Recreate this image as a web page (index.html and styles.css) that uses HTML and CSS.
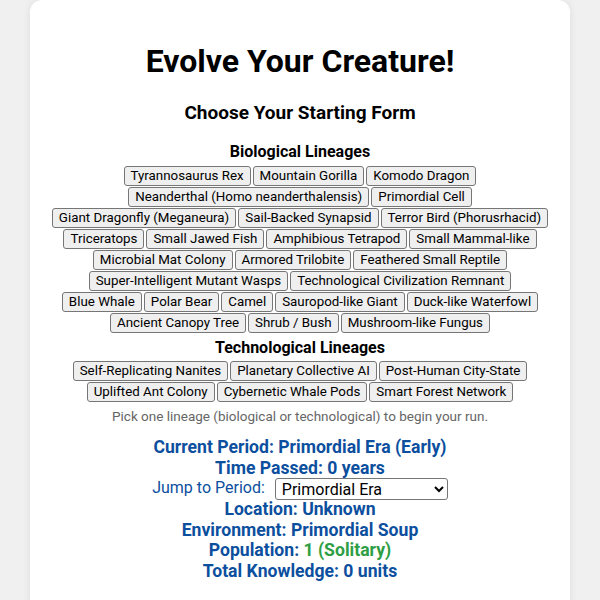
FILE: index.html
```html
<!DOCTYPE html>
<html>
<head>
<meta charset="utf-8">
<link rel="stylesheet" href="styles.css">
</head>
<body>
<div class="card">
  <h1 class="title">Evolve Your Creature!</h1>
  <h2 class="subtitle">Choose Your Starting Form</h2>
  <h3 class="group-title">Biological Lineages</h3>
  <div class="choices">
    <button>Tyrannosaurus Rex</button>
    <button>Mountain Gorilla</button>
    <button>Komodo Dragon</button>
    <button>Neanderthal (Homo neanderthalensis)</button>
    <button>Primordial Cell</button>
    <button>Giant Dragonfly (Meganeura)</button>
    <button>Sail-Backed Synapsid</button>
    <button>Terror Bird (Phorusrhacid)</button>
    <button>Triceratops</button>
    <button>Small Jawed Fish</button>
    <button>Amphibious Tetrapod</button>
    <button>Small Mammal-like</button>
    <button>Microbial Mat Colony</button>
    <button>Armored Trilobite</button>
    <button>Feathered Small Reptile</button>
    <button>Super-Intelligent Mutant Wasps</button>
    <button>Technological Civilization Remnant</button>
    <button>Blue Whale</button>
    <button>Polar Bear</button>
    <button>Camel</button>
    <button>Sauropod-like Giant</button>
    <button>Duck-like Waterfowl</button>
    <button>Ancient Canopy Tree</button>
    <button>Shrub / Bush</button>
    <button>Mushroom-like Fungus</button>
  </div>
  <h3 class="group-title tech">Technological Lineages</h3>
  <div class="choices">
    <button>Self-Replicating Nanites</button>
    <button>Planetary Collective AI</button>
    <button>Post-Human City-State</button>
    <button>Uplifted Ant Colony</button>
    <button>Cybernetic Whale Pods</button>
    <button>Smart Forest Network</button>
  </div>
  <p class="hint">Pick one lineage (biological or technological) to begin your run.</p>
  <div class="stats">
    <div class="stat">Current Period: Primordial Era (Early)</div>
    <div class="stat">Time Passed: 0 years</div>
    <div class="jump">
      <label>Jump to Period:</label>
      <select>
        <option>Primordial Era</option>
      </select>
    </div>
    <div class="stat">Location: Unknown</div>
    <div class="stat">Environment: Primordial Soup</div>
    <div class="stat">Population: <span class="good">1 (Solitary)</span></div>
    <div class="stat">Total Knowledge: 0 units</div>
  </div>
</div>
</body>
</html>
```

FILE: styles.css
```css
html, body {
  margin: 0;
  padding: 0;
  background: #f0f0f0;
  font-family: Roboto, "Liberation Sans", sans-serif;
}
.card {
  width: 540px;
  margin: 0 auto;
  background: #ffffff;
  border-radius: 12px;
  box-shadow: 0 0 8px rgba(0,0,0,0.08);
  padding: 20px 0 40px;
  text-align: center;
  min-height: 700px;
}
.title {
  font-size: 32px;
  font-weight: 700;
  margin: 22px 0 0;
  line-height: 38px;
}
.subtitle {
  font-size: 19px;
  font-weight: 700;
  margin: 21px 0 17px;
  line-height: 24px;
}
.group-title {
  font-size: 16px;
  font-weight: 700;
  margin: 5px 0 4px;
  line-height: 20px;
}
.group-title.tech {
  margin-bottom: 3px;
}
.choices {
  display: flex;
  flex-wrap: wrap;
  justify-content: center;
  gap: 1px 2px;
  padding: 0 21px;
}
.choices button {
  font-family: Roboto, "Liberation Sans", sans-serif;
  font-size: 13.33px;
  line-height: 16px;
  padding: 1px 6px;
  background: #efefef;
  color: #000;
  border: 1px solid #767676;
  border-radius: 3px;
}
.hint {
  color: #666666;
  font-size: 13.5px;
  margin: 5px 0 0;
  line-height: 18px;
}
.stats {
  margin-top: 12px;
  color: #0c4f9e;
  font-weight: 700;
  font-size: 17.6px;
  line-height: 20.5px;
}
.good {
  color: #2e9e44;
}
.jump {
  font-weight: 400;
  font-size: 16px;
  display: flex;
  justify-content: center;
  align-items: center;
  gap: 10px;
  height: 21px;
}
.jump select {
  font-family: Roboto, "Liberation Sans", sans-serif;
  font-size: 16px;
  width: 173px;
  height: 22px;
  padding: 0 2px;
  border: 1px solid #767676;
  border-radius: 3px;
  background: #fff;
  color: #000;
}
```
